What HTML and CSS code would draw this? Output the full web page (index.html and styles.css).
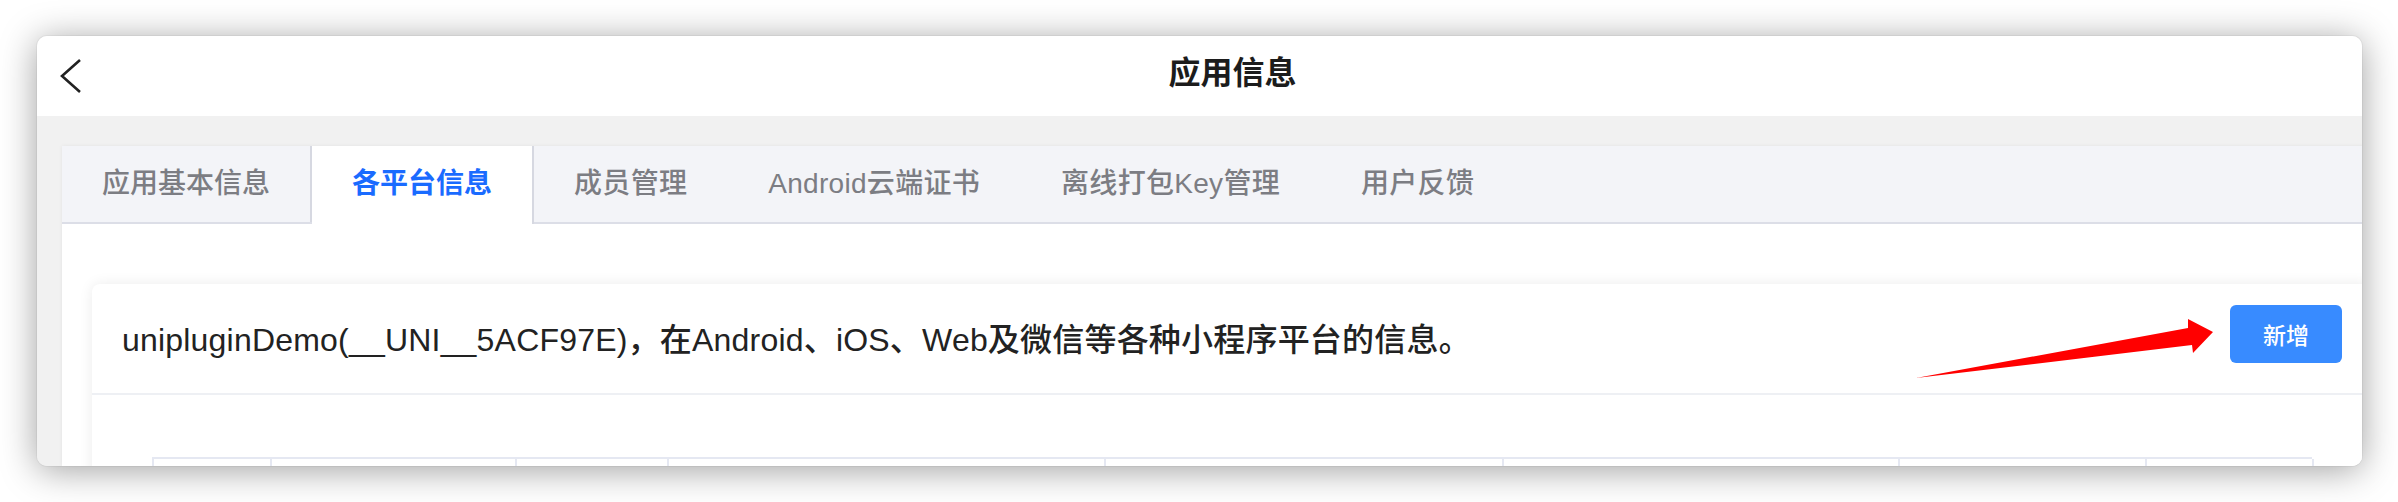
FILE: index.html
```html
<!DOCTYPE html>
<html lang="zh-CN">
<head>
<meta charset="utf-8">
<title>应用信息</title>
<link rel="stylesheet" href="styles.css">
</head>
<body>
<div class="window">
  <header class="titlebar">
    <div class="back">
      <svg width="24" height="36" viewBox="0 0 24 36"><polyline points="21,2 3,18 21,34" fill="none" stroke="#222" stroke-width="2.6" stroke-linejoin="miter"/></svg>
    </div>
    <h1 class="title">应用信息</h1>
  </header>
  <main class="content">
    <section class="panel">
      <nav class="tabs">
        <div class="tab tab-first tab-sep">应用基本信息</div>
        <div class="tab tab-active">各平台信息</div>
        <div class="tab">成员管理</div>
        <div class="tab">Android云端证书</div>
        <div class="tab">离线打包Key管理</div>
        <div class="tab">用户反馈</div>
      </nav>
      <div class="panel-body">
        <div class="card">
          <div class="card-head">
            <p class="card-title">unipluginDemo(__UNI__5ACF97E)，在Android、iOS、Web及微信等各种小程序平台的信息。</p>
            <button class="btn">新增</button>
            <svg class="arrow" width="310" height="67" viewBox="0 0 310 67"><polygon points="6,63 278,13 278,4 303,17 283,38 282,30" fill="#ff0000"/></svg>
          </div>
          <div class="card-body">
            <div class="grid">
              <div class="cell"></div>
              <div class="cell"></div>
              <div class="cell"></div>
              <div class="cell"></div>
              <div class="cell"></div>
              <div class="cell"></div>
              <div class="cell"></div>
              <div class="cell"></div>
            </div>
          </div>
        </div>
      </div>
    </section>
  </main>
</div>
</body>
</html>
```
FILE: styles.css
```css
html, body {
  margin: 0;
  padding: 0;
  background: #ffffff;
}
body {
  padding: 36px 0 0 37px;
  font-family: "Liberation Sans", "Noto Sans CJK SC", sans-serif;
  overflow: hidden;
  height: 502px;
  box-sizing: border-box;
}
.window {
  width: 2325px;
  height: 430px;
  border-radius: 10px;
  overflow: hidden;
  background: #f1f1f1;
  display: flex;
  flex-direction: column;
  box-shadow: 0 0 0 1px rgba(0,0,0,0.04), 0 4px 36px rgba(0,0,0,0.38);
}
.titlebar {
  height: 80px;
  flex: none;
  background: #ffffff;
  display: flex;
  align-items: center;
}
.back {
  width: 66px;
  height: 80px;
  display: flex;
  align-items: center;
  justify-content: center;
  flex: none;
}
.back svg {
  display: block;
  margin-left: 2px;
}
.title {
  flex: 1;
  margin: 0;
  text-align: center;
  font-size: 32px;
  font-weight: bold;
  color: #1c1c1c;
  line-height: 80px;
  margin-top: -6px;
}
.content {
  flex: 1;
  overflow: hidden;
  padding: 30px 0 0 25px;
  background: #f1f1f1;
}
.panel {
  width: 2340px;
  height: 100%;
  background: #ffffff;
  box-shadow: 0 0 4px rgba(0,0,0,0.06);
}
.tabs {
  display: flex;
  height: 76px;
  background: #f3f4f8;
  border-bottom: 2px solid #dcdee7;
}
.tab {
  padding: 0 41px 0 40px;
  line-height: 76px;
  font-size: 28px;
  font-weight: 500;
  color: #7c7d83;
  white-space: nowrap;
  letter-spacing: 0.3px;
}
.tab-first {
  padding-left: 40px;
  padding-right: 40px;
  letter-spacing: 0;
}
.tab-sep {
  border-right: 2px solid #d6d8e1;
}
.tab-active {
  background: #ffffff;
  color: #1a6bff;
  font-weight: bold;
  letter-spacing: 0;
  padding: 0 40px 0 40px;
  border-right: 2px solid #d6d8e1;
  height: 78px;
  margin-bottom: -2px;
}
.panel-body {
  padding: 60px 30px 0 30px;
}
.card {
  background: #ffffff;
  border-radius: 8px;
  box-shadow: 0 0 14px rgba(0,0,0,0.08);
}
.card-head {
  position: relative;
  height: 109px;
  border-bottom: 2px solid #eef0f4;
  padding: 0 30px;
  display: flex;
  align-items: flex-start;
  justify-content: space-between;
}
.card-title {
  margin: 0;
  margin-top: 36px;
  font-size: 32px;
  font-weight: 500;
  line-height: 40px;
  color: #222222;
  white-space: nowrap;
  letter-spacing: 0.2px;
}
.btn {
  margin-top: 21px;
  width: 112px;
  height: 58px;
  border: none;
  border-radius: 6px;
  background: #388bff;
  color: #ffffff;
  font-family: "Liberation Sans", "Noto Sans CJK SC", sans-serif;
  font-size: 23px;
  font-weight: 500;
  padding: 0;
}
.arrow {
  position: absolute;
  left: 1818px;
  top: 31px;
}
.card-body {
  padding: 62px 60px 0 60px;
}
.grid {
  display: grid;
  grid-template-columns: 118px 245px 152px 437px 398px 396px 247px 167px;
  border-top: 2px solid #e5e8f2;
  border-left: 2px solid #e5e8f2;
}
.cell {
  height: 80px;
  border-right: 2px solid #e5e8f2;
}
```
